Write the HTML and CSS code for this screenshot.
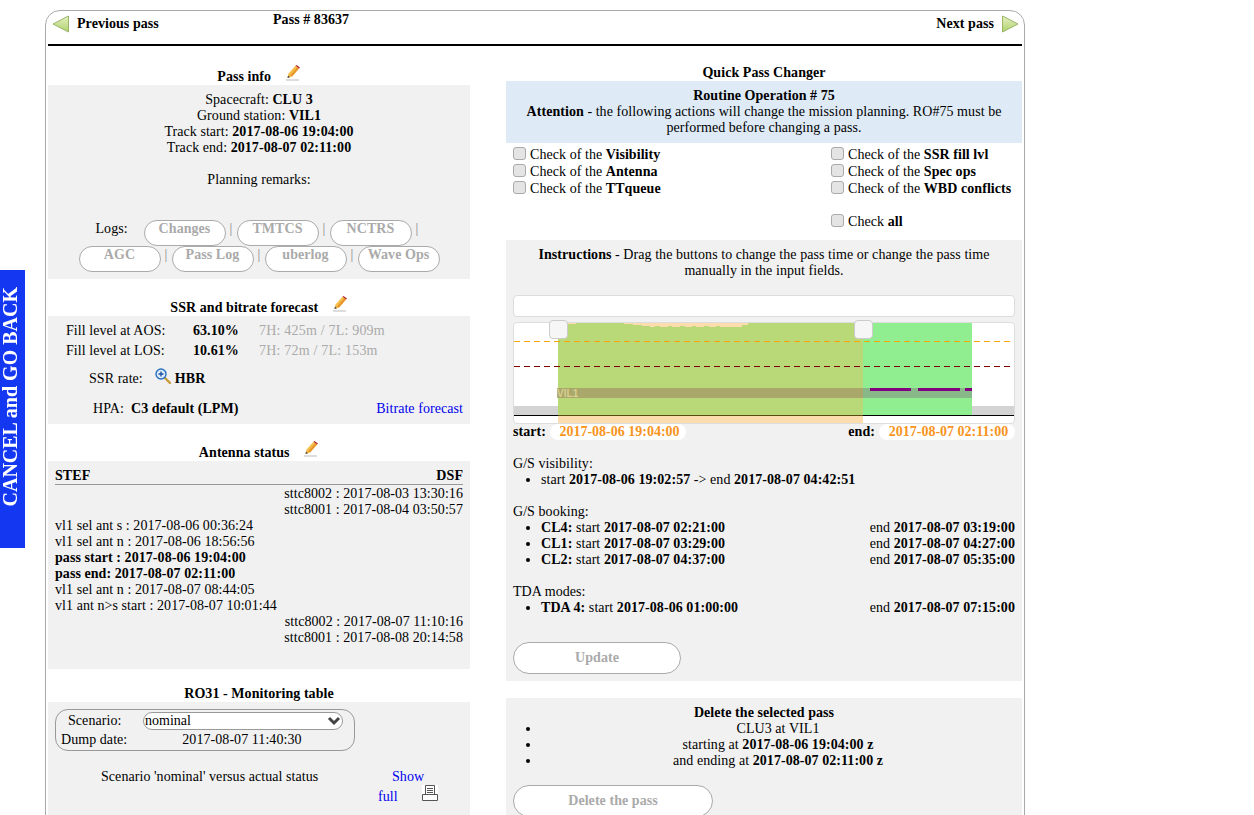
FILE: index.html
```html
<!DOCTYPE html>
<html lang="en">
<head>
    <meta charset="UTF-8">
    <title>Pass # 83637</title>
    <link rel="stylesheet" href="styles.css">
</head>
<body>
    <a class="goback" href="#"><span>CANCEL and GO BACK</span></a>
    <div class="page">
        <header class="passnav">
            <a class="prev" href="#">
                <svg width="18" height="18" viewBox="0 0 18 18"><defs><linearGradient id="ga" x1="0" y1="0" x2="0" y2="1"><stop offset="0" stop-color="#e6f0c4"/><stop offset="1" stop-color="#aed26a"/></linearGradient></defs><path d="M16.5 1 L16.5 17 L1 9 Z" fill="url(#ga)" stroke="#9ab56a" stroke-width="1" stroke-linejoin="round"/></svg>
                Previous pass
            </a>
            <b class="passno">Pass # 83637</b>
            <a class="next" href="#">
                Next pass
                <svg width="18" height="18" viewBox="0 0 18 18"><defs><linearGradient id="gb" x1="0" y1="0" x2="0" y2="1"><stop offset="0" stop-color="#e6f0c4"/><stop offset="1" stop-color="#aed26a"/></linearGradient></defs><path d="M1.5 1 L1.5 17 L17 9 Z" fill="url(#gb)" stroke="#9ab56a" stroke-width="1" stroke-linejoin="round"/></svg>
            </a>
        </header>

        <div class="columns">
            <div class="left">
                <h3 class="title first">Pass info
                    <svg class="pencil" width="16" height="16" viewBox="0 0 16 16"><path d="M1 15 H14" stroke="#ddd" stroke-width="2"/><path d="M2.5 13 L3.5 8.5 L10.5 .8 L14 3.5 L7 11.5 Z" fill="#f6bd4a"/><path d="M5 10.5 L12.2 2.2 L14 3.5 L7 11.5 Z" fill="#e8962c"/><path d="M10.5 .8 L11.5 0 L15 2.5 L14 3.5 Z" fill="#b3252c"/><path d="M2.5 13 L3 10.5 L5 12.2 Z" fill="#444"/></svg>
                </h3>
                <div class="box info">
                    <div>Spacecraft: <b>CLU 3</b></div>
                    <div>Ground station: <b>VIL1</b></div>
                    <div>Track start: <b>2017-08-06 19:04:00</b></div>
                    <div>Track end: <b>2017-08-07 02:11:00</b></div>
                    <div class="remarks">Planning remarks:</div>
                    <div class="logs">
                        <span class="logs-label">Logs:</span>
                        <a class="btn" href="#">Changes</a><i>|</i>
                        <a class="btn" href="#">TMTCS</a><i>|</i>
                        <a class="btn" href="#">NCTRS</a><i>|</i>
                        <a class="btn" href="#">AGC</a><i>|</i>
                        <a class="btn" href="#">Pass Log</a><i>|</i>
                        <a class="btn" href="#">uberlog</a><i>|</i>
                        <a class="btn" href="#">Wave Ops</a>
                    </div>
                </div>

                <h3 class="title">SSR and bitrate forecast
                    <svg class="pencil" width="16" height="16" viewBox="0 0 16 16"><path d="M1 15 H14" stroke="#ddd" stroke-width="2"/><path d="M2.5 13 L3.5 8.5 L10.5 .8 L14 3.5 L7 11.5 Z" fill="#f6bd4a"/><path d="M5 10.5 L12.2 2.2 L14 3.5 L7 11.5 Z" fill="#e8962c"/><path d="M10.5 .8 L11.5 0 L15 2.5 L14 3.5 Z" fill="#b3252c"/><path d="M2.5 13 L3 10.5 L5 12.2 Z" fill="#444"/></svg>
                </h3>
                <div class="box ssr">
                    <div class="fill"><span>Fill level at AOS:</span><b>63.10%</b><em>7H: 425m / 7L: 909m</em></div>
                    <div class="fill"><span>Fill level at LOS:</span><b>10.61%</b><em>7H: 72m / 7L: 153m</em></div>
                    <div class="rate">SSR rate:
                        <svg width="16" height="16" viewBox="0 0 16 16"><path d="M9.5 9.5 L15 15" stroke="#c79a3a" stroke-width="2.4" stroke-linecap="round"/><circle cx="6" cy="6" r="5" fill="#dcecfa" stroke="#2a6fc0" stroke-width="1.4"/><path d="M3.5 6 H8.5 M6 3.5 V8.5" stroke="#1d4f9c" stroke-width="1.3"/></svg>
                        <b>HBR</b>
                    </div>
                    <div class="hpa"><span>HPA: &nbsp;<b>C3 default (LPM)</b></span><a href="#">Bitrate forecast</a></div>
                </div>

                <h3 class="title">Antenna status
                    <svg class="pencil" width="16" height="16" viewBox="0 0 16 16"><path d="M1 15 H14" stroke="#ddd" stroke-width="2"/><path d="M2.5 13 L3.5 8.5 L10.5 .8 L14 3.5 L7 11.5 Z" fill="#f6bd4a"/><path d="M5 10.5 L12.2 2.2 L14 3.5 L7 11.5 Z" fill="#e8962c"/><path d="M10.5 .8 L11.5 0 L15 2.5 L14 3.5 Z" fill="#b3252c"/><path d="M2.5 13 L3 10.5 L5 12.2 Z" fill="#444"/></svg>
                </h3>
                <div class="box antenna">
                    <div class="ant-head"><b>STEF</b><b>DSF</b></div>
                    <div class="r">sttc8002 : 2017-08-03 13:30:16</div>
                    <div class="r">sttc8001 : 2017-08-04 03:50:57</div>
                    <div>vl1 sel ant s : 2017-08-06 00:36:24</div>
                    <div>vl1 sel ant n : 2017-08-06 18:56:56</div>
                    <div><b>pass start : 2017-08-06 19:04:00</b></div>
                    <div><b>pass end: 2017-08-07 02:11:00</b></div>
                    <div>vl1 sel ant n : 2017-08-07 08:44:05</div>
                    <div>vl1 ant n&gt;s start : 2017-08-07 10:01:44</div>
                    <div class="r">sttc8002 : 2017-08-07 11:10:16</div>
                    <div class="r">sttc8001 : 2017-08-08 20:14:58</div>
                </div>

                <h3 class="title ro31">RO31 - Monitoring table</h3>
                <div class="box monitoring">
                    <div class="scenario">
                        <div class="sc-row"><span class="sc-label">Scenario:</span>
                            <div class="sc-select"><select><option>nominal</option></select>
                                <svg width="14" height="10" viewBox="0 0 14 10"><path d="M2 2 L7 7 L12 2" fill="none" stroke="#444" stroke-width="3"/></svg>
                            </div>
                        </div>
                        <div class="sc-row dump"><span>Dump date:</span><span class="sc-date">2017-08-07 11:40:30</span></div>
                    </div>
                    <div class="versus">
                        <span class="versus-text">Scenario 'nominal' versus actual status</span>
                        <div class="show">
                            <a class="show-link" href="#">Show</a>
                            <div class="full"><a href="#">full</a>
                                <svg width="16" height="16" viewBox="0 0 16 16"><rect width="16" height="16" fill="#fff"/><path d="M3.5 .5 H12.5 V9.5 M3.5 9.5 V.5 M5 3.5 H11 M5 5.5 H11 M5 7.5 H11" fill="none" stroke="#555"/><path d="M.5 9.5 H15.5 V15.5 H.5 Z" fill="#fff" stroke="#555"/></svg>
                            </div>
                        </div>
                    </div>
                </div>
            </div>

            <div class="right">
                <h3 class="title first">Quick Pass Changer</h3>
                <div class="attention">
                    <b>Routine Operation # 75</b><br>
                    <b>Attention</b> - the following actions will change the mission planning. RO#75 must be performed before changing a pass.
                </div>
                <div class="checks">
                    <div class="check-col">
                        <label><input type="checkbox" disabled>Check of the&nbsp;<b>Visibility</b></label>
                        <label><input type="checkbox" disabled>Check of the&nbsp;<b>Antenna</b></label>
                        <label><input type="checkbox" disabled>Check of the&nbsp;<b>TTqueue</b></label>
                    </div>
                    <div class="check-col">
                        <label><input type="checkbox" disabled>Check of the&nbsp;<b>SSR fill lvl</b></label>
                        <label><input type="checkbox" disabled>Check of the&nbsp;<b>Spec ops</b></label>
                        <label><input type="checkbox" disabled>Check of the&nbsp;<b>WBD conflicts</b></label>
                        <label class="check-all"><input type="checkbox" disabled>Check&nbsp;<b>all</b></label>
                    </div>
                </div>
                <div class="box instructions">
                    <p class="howto"><b>Instructions</b> - Drag the buttons to change the pass time or change the pass time manually in the input fields.</p>
                    <div class="slider-bar"></div>
                    <div class="chart">
                        <svg width="500" height="100" viewBox="0 0 500 100">
                            <rect x="0" y="83" width="500" height="9" fill="#d3d3d3"/>
                            <rect x="44" y="0" width="305" height="100" fill="#fddcae"/>
                            <path d="M44 0 H54 V1 H62 V0 H110 V1 H119 V2 H128 V3 H136 V4 H141 V3 H146 V4 H154 V3 H158 V4 H166 V3 H171 V4 H178 V3 H182 V4 H190 V3 H195 V4 H202 V3 H206 V4 H228 V2 H234 V0 H349 V92 H44 Z" fill="#b9d877"/>
                            <rect x="349" y="0" width="109" height="92" fill="#90ee90"/>
                            <path d="M0 18.5 H500" stroke="#ffa500" stroke-dasharray="6 4"/>
                            <path d="M0 43.5 H500" stroke="#7a0000" stroke-dasharray="6 4"/>
                            <rect x="43" y="65" width="415" height="10" fill="#808080" fill-opacity=".5"/>
                            <path d="M43 65 H349 V75 H43 Z" fill="#b0a565" fill-opacity=".7"/>
                            <path d="M356 66.5 H397 M404 66.5 H446 M451 66.5 H458" stroke="#800080" stroke-width="3"/>
                            <text x="43" y="74" class="vil">VIL1</text>
                            <path d="M0 92.5 H500" stroke="#000"/>
                            <path d="M44 92.5 H349" stroke="#5a4a10"/>
                        </svg>
                        <span class="handle h1"></span>
                        <span class="handle h2"></span>
                    </div>
                    <div class="times">
                        <div class="time"><b>start:</b><input class="pill" value="2017-08-06 19:04:00"></div>
                        <div class="time"><b>end:</b><input class="pill" value="2017-08-07 02:11:00"></div>
                    </div>
                    <div class="info-block">
                        G/S visibility:
                        <ul><li>start <b>2017-08-06 19:02:57</b> -&gt; end <b>2017-08-07 04:42:51</b></li></ul>
                    </div>
                    <div class="info-block">
                        G/S booking:
                        <ul>
                            <li><span class="end">end <b>2017-08-07 03:19:00</b></span><b>CL4:</b> start <b>2017-08-07 02:21:00</b></li>
                            <li><span class="end">end <b>2017-08-07 04:27:00</b></span><b>CL1:</b> start <b>2017-08-07 03:29:00</b></li>
                            <li><span class="end">end <b>2017-08-07 05:35:00</b></span><b>CL2:</b> start <b>2017-08-07 04:37:00</b></li>
                        </ul>
                    </div>
                    <div class="info-block">
                        TDA modes:
                        <ul><li><span class="end">end <b>2017-08-07 07:15:00</b></span><b>TDA 4:</b> start <b>2017-08-06 01:00:00</b></li></ul>
                    </div>
                    <a class="btn big update" href="#">Update</a>
                </div>
                <div class="box delete">
                    <div class="delete-title"><b>Delete the selected pass</b></div>
                    <ul>
                        <li>CLU3 at VIL1</li>
                        <li>starting at <b>2017-08-06 19:04:00 z</b></li>
                        <li>and ending at <b>2017-08-07 02:11:00 z</b></li>
                    </ul>
                    <a class="btn big remove" href="#">Delete the pass</a>
                </div>
            </div>
        </div>
    </div>
</body>
</html>
```

FILE: styles.css
```css
html, body {
    height: 100%;
    overflow: hidden;
}
body {
    margin: 0;
    font-family: "Liberation Serif", "Times New Roman", serif;
    font-size: 14px;
    line-height: 16px;
    letter-spacing: .06px;
    color: #000;
    background-color: #fff;
}
a {
    color: #00e;
    text-decoration: none;
}
.goback {
    position: fixed;
    left: 0;
    top: 270px;
    box-sizing: border-box;
    width: 25px;
    height: 278px;
    padding: 0 5px 24px 0;
    background-color: #1438f2;
    color: #fff;
    font-size: 20px;
    font-weight: bold;
    letter-spacing: 0;
    display: flex;
    align-items: center;
    justify-content: center;
}
.goback span {
    writing-mode: vertical-rl;
    transform: rotate(180deg);
    white-space: nowrap;
}
.page {
    margin: 10px 0 0 45px;
    width: 974px;
    padding: 0 2px;
    border: 1px solid #aaa;
    border-radius: 15px;
    min-height: 900px;
}
.passnav {
    display: grid;
    grid-template-columns: 225px 1fr auto;
    height: 33px;
    border-bottom: 2px solid #000;
    font-weight: bold;
}
.passnav a {
    color: #000;
    display: flex;
    align-items: center;
    gap: 7px;
    height: 26px;
}
.prev {
    padding: 0 0 0 4px;
}
.next {
    padding-right: 3px;
}
.passno {
    padding-top: 1px;
}
.columns {
    display: flex;
    justify-content: space-between;
}
.left {
    width: 422px;
}
.right {
    width: 516px;
}
.title {
    height: 16px;
    margin: 21px 0 0;
    font-size: 14px;
    line-height: 16px;
    text-align: center;
}
.left .title.first {
    margin-top: 23px;
}
.right .title.first {
    margin-top: 19px;
}
.title.ro31 {
    margin-top: 17px;
}
.pencil {
    margin: -4px 0 0 10px;
    vertical-align: top;
}
.box {
    background-color: #f1f1f1;
}
.info {
    height: 187px;
    padding-top: 7px;
    text-align: center;
}
.remarks {
    margin-top: 16px;
}
.logs {
    display: flex;
    flex-wrap: wrap;
    justify-content: center;
    margin-top: 32px;
    padding: 0 20px;
}
.logs i {
    width: 11px;
    font-style: normal;
    line-height: 18px;
    text-align: center;
    color: #888;
}
.logs-label {
    width: 48px;
    box-sizing: border-box;
    padding-top: 1px;
    text-align: left;
}
.btn {
    display: inline-block;
    box-sizing: border-box;
    width: 82px;
    height: 26px;
    border: 1px solid #aaa;
    border-radius: 13px;
    background-color: #fff;
    color: #aaa;
    font-weight: bold;
    line-height: 16px;
    text-align: center;
    vertical-align: top;
}
.ssr {
    height: 108px;
    box-sizing: border-box;
    padding-top: 7px;
}
.fill {
    display: grid;
    grid-template-columns: 127px 66px auto;
    padding-left: 18px;
    height: 20px;
}
.fill em {
    font-style: normal;
    letter-spacing: .2px;
    color: #aaa;
}
.rate {
    display: flex;
    align-items: flex-start;
    gap: 4px;
    margin-top: 8px;
    padding-left: 41px;
}
.rate svg {
    margin: -3px 0 0 8px;
}
.hpa {
    display: flex;
    justify-content: space-between;
    margin-top: 14px;
    padding: 0 7px 0 45px;
}
.antenna {
    height: 208px;
    box-sizing: border-box;
    padding: 7px 7px 0;
}
.ant-head {
    display: flex;
    justify-content: space-between;
    border-bottom: 1px solid #999;
    height: 16px;
    margin-bottom: 1px;
}
.r {
    text-align: right;
}
.monitoring {
    height: 130px;
    padding-top: 7px;
}
.scenario {
    box-sizing: border-box;
    width: 300px;
    height: 42px;
    margin-left: 7px;
    padding: 1px 5px;
    border: 1px solid #999;
    border-radius: 13px;
}
.sc-row {
    display: flex;
    align-items: center;
    height: 19px;
}
.sc-label {
    width: 82px;
    padding-left: 7px;
    box-sizing: border-box;
}
.sc-select {
    position: relative;
    width: 200px;
    height: 18px;
}
.sc-select select {
    appearance: none;
    display: block;
    box-sizing: border-box;
    width: 100%;
    height: 18px;
    padding: 0 0 0 1px;
    border: 1px solid #999;
    border-radius: 9px;
    background-color: #fff;
    font: inherit;
    line-height: 16px;
}
.sc-select svg {
    position: absolute;
    right: 2px;
    top: 4px;
}
.sc-date {
    margin-left: 55px;
}
.versus {
    display: flex;
    margin-top: 18px;
}
.versus-text {
    width: 325px;
    padding-left: 53px;
    box-sizing: border-box;
    white-space: nowrap;
}
.show {
    width: 70px;
    margin-left: 5px;
}
.show-link {
    display: block;
    padding-left: 14px;
}
.full {
    display: flex;
    align-items: flex-start;
    gap: 24px;
    margin-top: 4px;
}
.full svg {
    margin-top: -4px;
}
.attention {
    box-sizing: border-box;
    height: 62px;
    padding: 7px 20px 0;
    background-color: #deeaf6;
    text-align: center;
}
.checks {
    display: grid;
    grid-template-columns: 318px 1fr;
    height: 97px;
    padding: 3px 0 0 7px;
    box-sizing: border-box;
}
.check-col label {
    display: flex;
    height: 17px;
    align-items: center;
}
.check-col input {
    appearance: none;
    box-sizing: border-box;
    width: 13px;
    height: 13px;
    margin: -3px 4px 0 0;
    border: 1px solid #aaa;
    border-radius: 3px;
    background-color: #e4e4e4;
}
.check-col .check-all {
    margin-top: 16px;
}
.instructions {
    height: 441px;
    box-sizing: border-box;
    padding: 7px 7px 0;
}
.howto {
    margin: 0 20px 16px;
    text-align: center;
}
.slider-bar {
    height: 22px;
    box-sizing: border-box;
    border: 1px solid #ddd;
    border-radius: 4px;
    background-color: #fff;
}
.chart {
    position: relative;
    box-sizing: border-box;
    height: 102px;
    margin-top: 5px;
    border: 1px solid #ddd;
    border-radius: 4px;
    background-color: #fff;
}
.chart svg {
    display: block;
}
.vil {
    font-family: "Liberation Sans", sans-serif;
    font-size: 10px;
    font-weight: bold;
    fill: #d8cf90;
}
.handle {
    position: absolute;
    top: -3px;
    box-sizing: border-box;
    width: 19px;
    height: 19px;
    border: 1px solid #ccc;
    border-radius: 4px;
    background-color: #f6f6f6;
}
.h1 {
    left: 35px;
}
.h2 {
    left: 340px;
}
.times {
    display: flex;
    justify-content: space-between;
    height: 16px;
}
.time {
    display: flex;
    align-items: center;
    gap: 4px;
}
.pill {
    box-sizing: border-box;
    width: 136px;
    height: 16px;
    border: 0;
    padding: 0 0 0 3px;
    border-radius: 8px;
    background-color: #fff;
    color: #f7941d;
    font: inherit;
    font-weight: bold;
    text-align: center;
}
.info-block {
    margin-top: 16px;
}
.instructions ul,
.delete ul {
    margin: 0;
    padding-left: 28px;
}
.end {
    float: right;
}
.update {
    display: block;
    width: 168px;
    height: 32px;
    margin: 26px 0 0;
    border-radius: 16px;
    line-height: 30px;
}
.delete {
    height: 130px;
    box-sizing: border-box;
    margin-top: 17px;
    padding: 7px 7px 0;
}
.delete-title {
    text-align: center;
}
.delete li {
    text-align: center;
}
.remove {
    display: block;
    width: 200px;
    height: 32px;
    margin: 16px 0 0;
    border-radius: 16px;
    line-height: 30px;
}
```
